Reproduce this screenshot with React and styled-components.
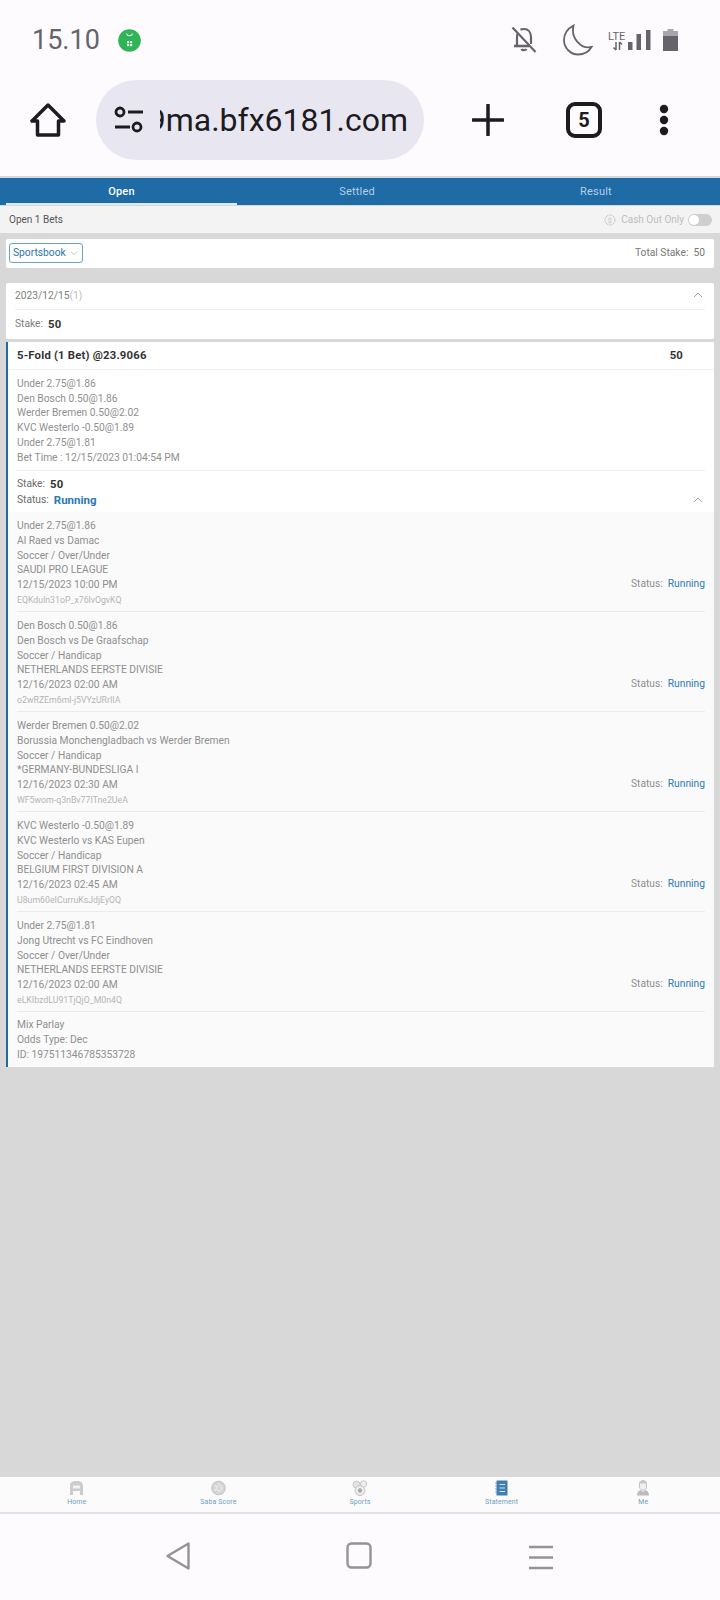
import React from "react";
import styled, { createGlobalStyle } from "styled-components";

const GlobalStyle = createGlobalStyle`
  html, body {
    margin: 0;
    padding: 0;
    background: #fefbff;
  }
  * {
    box-sizing: border-box;
  }
  body {
    font-family: Roboto, "Liberation Sans", sans-serif;
  }
`;

const Screen = styled.div`
  width: 720px;
  height: 1600px;
  display: flex;
  flex-direction: column;
  overflow: hidden;
`;

const StatusBar = styled.div`
  height: 80px;
  flex: none;
  display: flex;
  align-items: center;
  padding: 0 42px 0 32px;
  color: #66646a;
`;

const Time = styled.span`
  font-size: 27px;
  margin-right: 18px;
`;

const StatusIcons = styled.div`
  margin-left: auto;
  display: flex;
  align-items: center;
`;

const StatusIcon = styled.svg`
  margin-left: ${(p) => p.$gap || 0}px;
`;

const Toolbar = styled.div`
  height: 96px;
  flex: none;
  display: flex;
  align-items: flex-start;
  padding: 0 0 0 30px;
`;

const UrlPill = styled.div`
  width: 328px;
  height: 80px;
  margin-left: 30px;
  border-radius: 40px;
  background: #e8e7f1;
  display: flex;
  align-items: center;
  padding: 0 16px 0 18px;
  color: #1c1b20;
`;

const UrlClip = styled.div`
  width: 248px;
  margin-left: 16px;
  flex: none;
  overflow: hidden;
  display: flex;
  justify-content: flex-end;
  font-size: 32px;
  white-space: nowrap;
`;

const ToolButton = styled.div`
  height: 80px;
  display: flex;
  align-items: center;
  justify-content: center;
  margin-left: ${(p) => p.$gap}px;
`;

const TabCount = styled.div`
  width: 36px;
  height: 36px;
  border: 4px solid #1c1b20;
  border-radius: 9px;
  display: flex;
  align-items: center;
  justify-content: center;
  font-size: 20px;
  font-weight: 700;
  color: #1c1b20;
`;

const Page = styled.div`
  flex: 1;
  background: #d8d8d8;
  padding-top: 2px;
  display: flex;
  flex-direction: column;
`;

const Tabs = styled.div`
  height: 28px;
  background: #1f6ba5;
  border-bottom: 1px solid #d8d8d8;
  display: grid;
  grid-template-columns: 231px 240px 238px;
  padding-left: 6px;
`;

const Tab = styled.div`
  display: flex;
  align-items: center;
  justify-content: center;
  padding-top: 1px;
  font-size: 11px;
  font-weight: ${(p) => (p.$active ? 500 : 400)};
  letter-spacing: 0.2px;
  color: ${(p) => (p.$active ? "#ffffff" : "#b4cfe4")};
  border-bottom: 2px solid ${(p) => (p.$active ? "#dcebf5" : "transparent")};
  height: 27px;
`;

const FilterRow = styled.div`
  height: 27px;
  background: #f3f3f3;
  display: flex;
  align-items: center;
  padding: 0 8px 0 9px;
  font-size: 10px;
  color: #555;
`;

const CashOut = styled.div`
  margin-left: auto;
  display: flex;
  align-items: center;
  color: #bdbdbd;
`;

const CashIcon = styled.svg`
  margin-right: 5px;
`;

const Switch = styled.div`
  width: 24px;
  height: 12px;
  border-radius: 6px;
  background: #cfcfcf;
  margin-left: 4px;
  padding: 1px;
`;

const Knob = styled.div`
  width: 10px;
  height: 10px;
  border-radius: 50%;
  background: #fff;
`;

const SelectCard = styled.div`
  margin: 6px 6px 0;
  height: 29px;
  background: #fff;
  border-radius: 2px;
  display: flex;
  align-items: center;
  padding: 0 9px 2px 3px;
  font-size: 10.25px;
  color: #777;
`;

const Select = styled.div`
  height: 20px;
  width: 74px;
  border: 1px solid #6ba3c6;
  border-radius: 3px;
  display: flex;
  align-items: center;
  padding-left: 3px;
  color: #2a76ab;
  gap: 4px;
`;

const TotalStake = styled.div`
  margin-left: auto;
`;

const DateCard = styled.div`
  margin: 15px 6px 0;
  height: 56px;
  background: #fff;
  border-radius: 2px;
  padding: 0 9px;
  font-size: 10.25px;
  color: #808080;
`;

const DateHead = styled.div`
  height: 27px;
  border-bottom: 1px solid #f0f0f0;
  display: flex;
  align-items: center;
  justify-content: space-between;
  padding: 0 2px 2px 0;
`;

const Muted = styled.span`
  color: #bbb;
`;

const StakeLine = styled.div`
  height: 28px;
  display: flex;
  align-items: center;
  padding-bottom: 2px;
  gap: 5px;
`;

const StakeValue = styled.b`
  font-size: 11.3px;
  font-weight: 700;
  color: #333;
  letter-spacing: 0.2px;
  padding-top: 2px;
`;

const BetCard = styled.div`
  margin: 3px 6px 0;
  background: #fff;
  border-left: 2px solid #1f6ba5;
  font-size: 10.25px;
  color: #8f8f8f;
`;

const BetTitle = styled.div`
  height: 28px;
  display: flex;
  align-items: center;
  justify-content: space-between;
  padding: 0 31px 0 9px;
  font-size: 11.3px;
  font-weight: 700;
  letter-spacing: 0.2px;
  color: #333;
  border-bottom: 1px solid #f3f3f3;
`;

const Lines = styled.div`
  padding: 7px 0 5px;
  margin: 0 9px;
  line-height: 14.7px;
  border-bottom: 1px solid #f0f0f0;
`;

const StatusBlock = styled.div`
  padding: 5px 9px 5px;
  color: #6a6a6a;
  display: flex;
  flex-direction: column;
  gap: 1px;
`;

const StatusLine = styled.div`
  height: 15px;
  display: flex;
  align-items: center;
  gap: 5px;
`;

const RunningBold = styled.b`
  font-size: 11.5px;
  font-weight: 700;
  color: #2a7ab8;
`;

const StatusChevron = styled.div`
  margin-left: auto;
  padding-right: 2px;
  display: flex;
`;

const LegsPanel = styled.div`
  background: #fafafa;
`;

const Leg = styled.div`
  margin: 0 9px;
  padding: 7px 0 5px;
  line-height: 14.7px;
  border-bottom: 1px solid #ececec;
  position: relative;
  height: 100px;
`;

const Ticket = styled.div`
  font-size: 8.75px;
  color: #b5b5b5;
  line-height: 15px;
`;

const LegStatus = styled.div`
  position: absolute;
  right: 0;
  top: 65px;
  color: #8f8f8f;
`;

const RunningLink = styled.span`
  color: #2a7ab8;
  margin-left: 5px;
`;

const Footer = styled.div`
  margin: 0 9px;
  padding: 6px 0 5px;
  line-height: 14.7px;
`;

const BottomNav = styled.div`
  margin-top: auto;
  height: 35px;
  flex: none;
  background: #fbfbfb;
  display: grid;
  grid-template-columns: repeat(5, 1fr);
  padding: 0 6px;
`;

const NavItem = styled.div`
  display: flex;
  flex-direction: column;
  align-items: center;
  padding-top: 3px;
  font-size: 7px;
  color: #6f9fc0;
  line-height: 8px;
  letter-spacing: 0.1px;
  gap: 2px;
`;

const SystemNav = styled.div`
  height: 88px;
  flex: none;
  background: #fefbff;
  border-top: 2px solid #e3e0ea;
  display: flex;
  align-items: flex-start;
  justify-content: center;
  padding-top: 28px;
  gap: 156px;
`;

const LEGS = [
  ["Under 2.75@1.86", "Al Raed vs Damac", "Soccer / Over/Under", "SAUDI PRO LEAGUE", "12/15/2023 10:00 PM", "EQKduln31oP_x76lvOgvKQ"],
  ["Den Bosch 0.50@1.86", "Den Bosch vs De Graafschap", "Soccer / Handicap", "NETHERLANDS EERSTE DIVISIE", "12/16/2023 02:00 AM", "o2wRZEm6ml-j5VYzURrIIA"],
  ["Werder Bremen 0.50@2.02", "Borussia Monchengladbach vs Werder Bremen", "Soccer / Handicap", "*GERMANY-BUNDESLIGA I", "12/16/2023 02:30 AM", "WF5wom-q3nBv77ITne2UeA"],
  ["KVC Westerlo -0.50@1.89", "KVC Westerlo vs KAS Eupen", "Soccer / Handicap", "BELGIUM FIRST DIVISION A", "12/16/2023 02:45 AM", "U8um60eICurruKsJdjEyOQ"],
  ["Under 2.75@1.81", "Jong Utrecht vs FC Eindhoven", "Soccer / Over/Under", "NETHERLANDS EERSTE DIVISIE", "12/16/2023 02:00 AM", "eLKIbzdLU91TjQjO_M0n4Q"],
];

const SUMMARY = [
  "Under 2.75@1.86",
  "Den Bosch 0.50@1.86",
  "Werder Bremen 0.50@2.02",
  "KVC Westerlo -0.50@1.89",
  "Under 2.75@1.81",
  "Bet Time : 12/15/2023 01:04:54 PM",
];

const Chevron = ({ up, color = "#999", size = 10 }) => (
  <svg width={size} height={size} viewBox="0 0 10 10" fill="none" stroke={color} strokeWidth="0.9">
    <path d={up ? "M1 7l4-4 4 4" : "M1.5 3.5L5 7l3.5-3.5"} />
  </svg>
);

const NavIcon = ({ kind }) => {
  if (kind === "home")
    return (
      <svg width="15" height="16" viewBox="0 0 15 16">
        <path d="M1 15V5.5C1 3 3 1 7.5 1S14 3 14 5.5V15h-3v-4H4v4z" fill="#cccccc" />
        <rect x="4" y="5.5" width="7" height="3" fill="#f2f2f2" />
      </svg>
    );
  if (kind === "score")
    return (
      <svg width="15" height="16" viewBox="0 0 15 16">
        <circle cx="7.5" cy="8" r="6.8" fill="#d6d6d6" stroke="#c2c2c2" />
        <path d="M3.5 5.5l3 1-1 3 2.5 2 3-2.5-1.5-3-2-2.5M3 10l2.5-.5" fill="none" stroke="#f0f0f0" strokeWidth="1" />
      </svg>
    );
  if (kind === "sports")
    return (
      <svg width="16" height="16" viewBox="0 0 16 16">
        <circle cx="4.5" cy="4.5" r="3.5" fill="#e4e4e4" stroke="#c8c8c8" />
        <circle cx="11.5" cy="4" r="3.2" fill="#efefef" stroke="#c8c8c8" />
        <circle cx="8" cy="10.5" r="5" fill="#ececec" stroke="#c4c4c4" />
        <path d="M8 8l2.3 1.7-.9 2.7H6.6l-.9-2.7z" fill="#a8a8a8" />
      </svg>
    );
  if (kind === "statement")
    return (
      <svg width="13" height="16" viewBox="0 0 13 16">
        <rect x="1.5" y="0.5" width="11" height="15" rx="0.5" fill="#3f7fb3" />
        <path d="M0 3h2M0 6h2M0 9h2M0 12h2" stroke="#6d9fc6" strokeWidth="0.8" />
        <path d="M4.5 4.5h5.5M4.5 8h5.5M4.5 11.5h5.5" stroke="#d5e4ef" strokeWidth="1.1" />
      </svg>
    );
  return (
    <svg width="14" height="16" viewBox="0 0 14 16">
      <path d="M3.5 3.5C3.5 1.5 5 .5 7 .5s3.5 1 3.5 3V7c0 1.8-1.500 3-3.500 3S3.500 8.800 3.500 7z" fill="#f0f0f0" stroke="#c4c4c4" />
      <path d="M3.5 3.5h7V2L7 .8 3.5 2z" fill="#c6c6c6" />
      <path d="M1 15.5c0-3 1.5-5 4-5.500l2 2 2-2c2.500.5 4 2.500 4 5.500z" fill="#bcbcbc" />
    </svg>
  );
};

const NAV = [
  ["home", "Home"],
  ["score", "Saba Score"],
  ["sports", "Sports"],
  ["statement", "Statement"],
  ["me", "Me"],
];

export default function App() {
  return (
    <Screen>
      <GlobalStyle />
      <StatusBar>
        <Time>15.10</Time>
        <svg width="23" height="23" viewBox="0 0 23 23">
          <circle cx="11.5" cy="11.5" r="11.3" fill="#2fb457" />
          <path d="M8.5 4.5c.5 3 5.5 3 6 0" fill="none" stroke="#d8f3df" strokeWidth="1.1" />
          <rect x="9" y="12" width="2.2" height="2.2" fill="#e6f7ea" />
          <rect x="12" y="12" width="2.2" height="2.2" fill="#e6f7ea" />
          <rect x="9" y="15" width="2.2" height="2.2" fill="#e6f7ea" />
          <rect x="12" y="15" width="2.2" height="2.2" fill="#e6f7ea" />
        </svg>
        <StatusIcons>
          <StatusIcon width="26" height="28" viewBox="0 0 26 28" fill="none" stroke="#66646a" strokeWidth="2.2">
            <path d="M1.5 1.5L24.5 26" />
            <path d="M7 7c-.6 1.2-1 2.5-1 4v8M9.5 3.8C10.5 3.2 11.7 3 13 3c4 0 7 3 7 8v7" />
            <path d="M3 20h15" strokeWidth="2.6" />
            <path d="M10.5 23c.6 1.6 4 1.6 5 0" />
          </StatusIcon>
          <StatusIcon $gap={26} width="30" height="32" viewBox="0 0 30 32" fill="none" stroke="#66646a" strokeWidth="1.8">
            <path d="M10.5 1.5C4 5 1 10 1 16c0 8 6.5 14.5 14 14.5 6 0 11-3 13.5-7.5C18 25.5 7.5 14 10.5 1.5z" />
          </StatusIcon>
          <StatusIcon $gap={14} width="44" height="24" viewBox="0 0 44 24">
            <text x="1" y="12" fontSize="11" fontFamily="Roboto, sans-serif" fill="#66646a">LTE</text>
            <path d="M9 14v8M6.5 19.5L9 22M12.5 22v-8M12.5 14l2.5 2.5" stroke="#66646a" strokeWidth="1.5" fill="none" />
            <rect x="21" y="14" width="4.5" height="8" fill="#66646a" />
            <rect x="29.5" y="6" width="4.5" height="16" fill="#66646a" />
            <rect x="39" y="2" width="4.5" height="20" fill="#66646a" />
          </StatusIcon>
          <StatusIcon $gap={12} width="15" height="22" viewBox="0 0 15 22">
            <rect x="4.5" y="0" width="6" height="2.5" fill="#a8a6ab" />
            <rect x="0" y="2" width="15" height="20" fill="#a8a6ab" />
            <rect x="0" y="7" width="15" height="15" fill="#66646a" />
          </StatusIcon>
        </StatusIcons>
      </StatusBar>

      <Toolbar>
        <ToolButton $gap={0}>
          <svg width="36" height="36" viewBox="0 0 36 36" fill="none" stroke="#1c1b20" strokeWidth="3.5" strokeLinejoin="round">
            <path d="M18 3L2 19h5.5v14h21V19H34z" />
          </svg>
        </ToolButton>
        <UrlPill>
          <svg width="30" height="28" viewBox="0 0 30 28" fill="none" stroke="#1c1b20" strokeWidth="2.8">
            <circle cx="6" cy="6" r="4" />
            <path d="M14 6h15M1 21h15" />
            <circle cx="23" cy="21" r="4" />
          </svg>
          <UrlClip>9ma.bfx6181.com</UrlClip>
        </UrlPill>
        <ToolButton $gap={48}>
          <svg width="32" height="32" viewBox="0 0 32 32" stroke="#1c1b20" strokeWidth="3.5" strokeLinecap="round">
            <path d="M16 1v30M1 16h30" />
          </svg>
        </ToolButton>
        <ToolButton $gap={62}>
          <TabCount>5</TabCount>
        </ToolButton>
        <ToolButton $gap={57}>
          <svg width="10" height="32" viewBox="0 0 10 32" fill="#1c1b20">
            <circle cx="5" cy="5" r="4.2" />
            <circle cx="5" cy="16" r="4.2" />
            <circle cx="5" cy="27" r="4.2" />
          </svg>
        </ToolButton>
      </Toolbar>

      <Page>
        <Tabs>
          <Tab $active>Open</Tab>
          <Tab>Settled</Tab>
          <Tab>Result</Tab>
        </Tabs>
        <FilterRow>
          Open 1 Bets
          <CashOut>
            <CashIcon width="12" height="12" viewBox="0 0 12 12" fill="none" stroke="#c4c4c4">
              <circle cx="6" cy="6" r="5" strokeDasharray="2.5 .6" />
              <text x="3.8" y="8.5" fontSize="7" fill="#c4c4c4" stroke="none" fontFamily="Roboto, sans-serif">$</text>
            </CashIcon>
            Cash Out Only
            <Switch>
              <Knob />
            </Switch>
          </CashOut>
        </FilterRow>

        <SelectCard>
          <Select>
            Sportsbook
            <Chevron color="#8fb6d2" size={8} />
          </Select>
          <TotalStake>Total Stake:&nbsp; 50</TotalStake>
        </SelectCard>

        <DateCard>
          <DateHead>
            <span>
              2023/12/15<Muted>(1)</Muted>
            </span>
            <Chevron up />
          </DateHead>
          <StakeLine>
            Stake:
            <StakeValue>50</StakeValue>
          </StakeLine>
        </DateCard>

        <BetCard>
          <BetTitle>
            <span>5-Fold (1 Bet) @23.9066</span>
            <span>50</span>
          </BetTitle>
          <Lines>
            {SUMMARY.map((line) => (
              <div key={line}>{line}</div>
            ))}
          </Lines>
          <StatusBlock>
            <StatusLine>
              Stake:
              <StakeValue>50</StakeValue>
            </StatusLine>
            <StatusLine>
              Status:
              <RunningBold>Running</RunningBold>
              <StatusChevron>
                <Chevron up />
              </StatusChevron>
            </StatusLine>
          </StatusBlock>
          <LegsPanel>
            {LEGS.map((leg) => (
              <Leg key={leg[5]}>
                {leg.slice(0, 5).map((line) => (
                  <div key={line}>{line}</div>
                ))}
                <Ticket>{leg[5]}</Ticket>
                <LegStatus>
                  Status:
                  <RunningLink>Running</RunningLink>
                </LegStatus>
              </Leg>
            ))}
            <Footer>
              <div>Mix Parlay</div>
              <div>Odds Type: Dec</div>
              <div>ID: 197511346785353728</div>
            </Footer>
          </LegsPanel>
        </BetCard>

        <BottomNav>
          {NAV.map(([kind, label]) => (
            <NavItem key={kind}>
              <NavIcon kind={kind} />
              {label}
            </NavItem>
          ))}
        </BottomNav>
      </Page>

      <SystemNav>
        <svg width="24" height="28" viewBox="0 0 24 28" fill="none" stroke="#949494" strokeWidth="2.4" strokeLinejoin="round">
          <path d="M22.5 1.5L1.5 14l21 12.5z" />
        </svg>
        <svg width="26" height="28" viewBox="0 0 26 28" fill="none" stroke="#949494" strokeWidth="2.4">
          <rect x="1.5" y="1.5" width="23" height="24" rx="4" />
        </svg>
        <svg width="26" height="28" viewBox="0 0 26 28" stroke="#949494" strokeWidth="2.4">
          <path d="M1 5h24M1 15.5h24M1 26h24" />
        </svg>
      </SystemNav>
    </Screen>
  );
}
